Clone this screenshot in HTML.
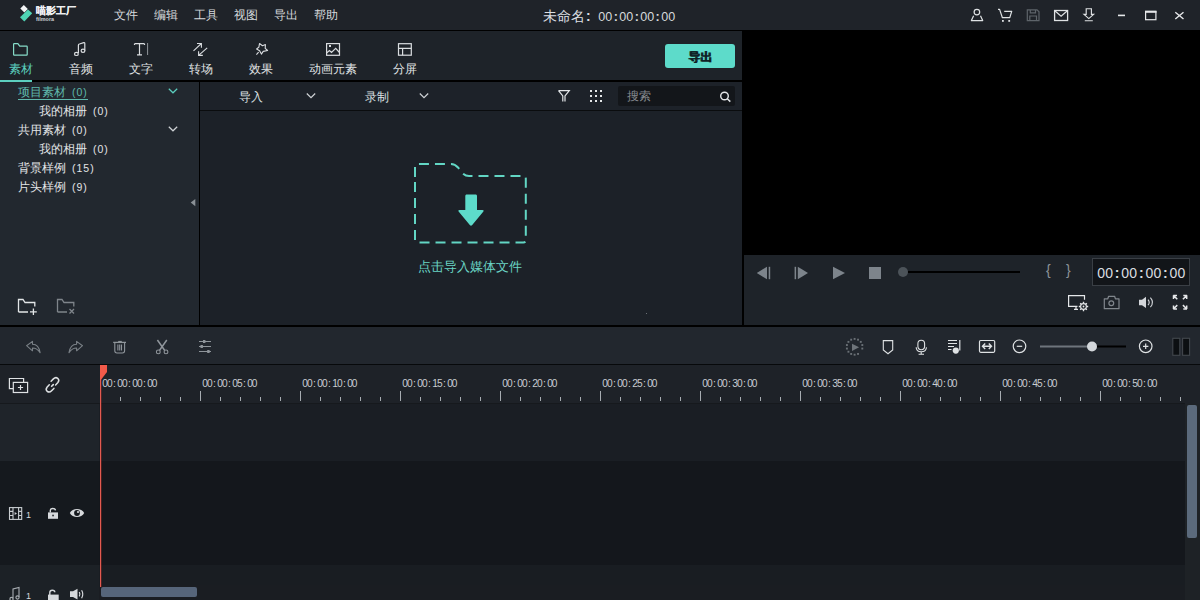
<!DOCTYPE html>
<html><head><meta charset="utf-8">
<style>
*{margin:0;padding:0;box-sizing:border-box}
html,body{width:1200px;height:600px;overflow:hidden;background:#000}
body{position:relative;font-family:"Liberation Sans",sans-serif;color:#d4d7da;font-size:12px;font-weight:500}
.a{position:absolute}
svg{position:absolute;overflow:visible}
.t{position:absolute;white-space:nowrap;line-height:1}
.tc i,.tc b{display:inline-block;text-align:center;font-style:normal}
.tc i{font-weight:normal}
.tc1 i{width:7.05px}.tc1 b{width:6.9px;font-weight:bold}
.tc2 i{width:8.05px}.tc2 b{width:8px;font-weight:bold}
.tc3 i{width:4.7px}.tc3 b{width:5.6px;font-weight:normal}
.n{font-size:10.5px;letter-spacing:1px;margin-left:6px}
</style></head><body>

<!-- TITLE BAR -->
<div class="a" style="left:0;top:0;width:1200px;height:30px;background:#1f2329"></div>
<!-- logo -->
<svg style="left:0;top:0" width="100" height="30">
  <polygon points="20.3,8.6 23.8,5 27.8,9 24.3,12.5" fill="#f2f4f5"/>
  <polygon points="20,17.3 28,9.5 32.2,13.3 24.3,21.6" fill="#4fd4b4"/>
</svg>
<div class="t" style="left:36px;top:6px;font-size:10px;font-weight:bold;text-shadow:0.3px 0 0 #f0f2f3;color:#f0f2f3">喵影工厂</div>
<div class="t" style="left:36px;top:16.6px;font-size:5.4px;font-weight:bold;color:#cfd2d5">filmora</div>

<div class="t" style="left:114px;top:9px;font-size:12px;color:#d6d9dc">文件</div>
<div class="t" style="left:154px;top:9px;font-size:12px;color:#d6d9dc">编辑</div>
<div class="t" style="left:194px;top:9px;font-size:12px;color:#d6d9dc">工具</div>
<div class="t" style="left:234px;top:9px;font-size:12px;color:#d6d9dc">视图</div>
<div class="t" style="left:274px;top:9px;font-size:12px;color:#d6d9dc">导出</div>
<div class="t" style="left:314px;top:9px;font-size:12px;color:#d6d9dc">帮助</div>

<div class="t" style="left:543px;top:10px;font-size:13.8px;color:#dcdfe2">未命名<b style="font-weight:bold;margin-left:1px">:</b></div>
<div class="t tc tc1" style="left:598.2px;top:11px;font-size:12.5px;color:#d6d9dc"><i>0</i><i>0</i><b>:</b><i>0</i><i>0</i><b>:</b><i>0</i><i>0</i><b>:</b><i>0</i><i>0</i></div>



<svg style="left:0;top:0" width="1200" height="30" fill="none" stroke-width="1.2">
  <!-- user -->
  <circle cx="976.9" cy="12.1" r="2.8" stroke="#dfe2e4"/>
  <path d="M973.6 15.7 L971.4 20.6 H982.7 L980.5 15.7" stroke="#dfe2e4" stroke-linejoin="round"/>
  <!-- cart -->
  <path d="M998 9.4 H999.6 L1002.4 17.7 H1009.8 L1011.7 11.4 H1004.2" stroke="#dfe2e4" stroke-linejoin="round"/>
  <rect x="1002" y="20" width="1.8" height="1.8" fill="#dfe2e4" stroke="none"/>
  <rect x="1008.3" y="20" width="1.8" height="1.8" fill="#dfe2e4" stroke="none"/>
  <!-- save -->
  <path d="M1027.3 9.8 H1037 L1039 11.8 V20.6 H1027.3 Z M1030.3 9.8 V12.8 H1035.5 V9.8 M1029.8 20.6 V16 H1036.5 V20.6" stroke="#5e646a"/>
  <!-- mail -->
  <rect x="1054.6" y="10.5" width="13" height="10" stroke="#dfe2e4" stroke-width="1.3"/>
  <path d="M1054.8 10.8 L1061.1 16.2 L1067.4 10.8" stroke="#dfe2e4" stroke-width="1.2"/>
  <!-- download -->
  <path d="M1086.2 8.7 H1091.4 V14.4 H1093.6 L1088.8 18.6 L1084 14.4 H1086.2 Z M1084.8 20.7 H1092.8" stroke="#dfe2e4" stroke-width="1.15"/>
  <!-- min max close -->
  <rect x="1118" y="14.6" width="7" height="1.6" fill="#e6e8ea" stroke="none"/>
  <rect x="1145.6" y="11.4" width="10.3" height="8.3" stroke="#e6e8ea" stroke-width="1.2"/>
  <rect x="1145" y="10.8" width="11.5" height="2" fill="#e6e8ea" stroke="none"/>
  <path d="M1175.3 12.2 L1183.5 19 M1183.5 12.2 L1175.3 19" stroke="#e6e8ea" stroke-width="1.4"/>
</svg>

<!-- ============ MEDIA PANEL ============ -->
<div class="a" style="left:0;top:31px;width:742px;height:49px;background:#1e2329"></div>
<!-- active underline -->
<div class="a" style="left:0;top:80px;width:32px;height:2px;background:#5ccfbf"></div>
<!-- tab icons -->
<svg style="left:0;top:30px" width="430" height="30" fill="none" stroke-width="1.2">
  <!-- folder (active) -->
  <path d="M13.6 14.3 Q13.6 13.7 14.2 13.7 H17.9 L19.7 16.2 H26.6 Q27.2 16.2 27.2 16.8 V24.6 Q27.2 25.2 26.6 25.2 H14.2 Q13.6 25.2 13.6 24.6 Z" stroke="#86dcc8" stroke-linejoin="round"/>
  <!-- music -->
  <path d="M78.4 23 V15.2 Q78.4 14.2 79.4 14 L83.8 12.7 Q84.8 12.5 84.8 13.5 V20.5" stroke="#dadde0"/>
  <ellipse cx="76.4" cy="23.9" rx="1.9" ry="1.6" stroke="#dadde0"/>
  <ellipse cx="83" cy="20.8" rx="1.9" ry="1.6" stroke="#dadde0"/>
  <!-- T -->
  <path d="M134.5 13.7 H144.5 M139.5 13.7 V24.8 M137 24.8 H142 M134.5 13.7 V14.9 M144.5 13.7 V14.9" stroke="#dadde0"/>
  <path d="M147.6 13 V25" stroke="#9ea3a8" stroke-width="0.9"/>
  <!-- transition -->
  <path d="M193.5 20.8 L201.4 13.5 M197 13.5 H201.4 V17.7 M207.2 17.9 L198.6 25.4 M198.6 21.2 V25.4 H202.8" stroke="#dadde0" stroke-width="1.1"/>
  <!-- effects star wand -->
  <path d="M259.5 13.5 L262.5 15.7 L265.4 14.6 L265.2 18.4 L267.6 20.5 L263.2 21.4 L261.4 24.1 L259.6 20.8 L256.6 19 L258.9 17.1 Z M258.6 22.2 L256.4 24.7" stroke="#dadde0" stroke-linejoin="round" stroke-width="1.1"/>
  <!-- image -->
  <rect x="326.6" y="13.6" width="12.9" height="11.7" stroke="#dadde0"/>
  <path d="M326.8 22.8 L329.5 20.5 L331.5 22.5 L335.7 18.4 L339.5 22.5" stroke="#dadde0"/>
  <rect x="329" y="15" width="2" height="2" fill="#dadde0" stroke="none"/>
  <!-- split -->
  <rect x="398.5" y="13.7" width="12.8" height="11.5" stroke="#dadde0"/>
  <path d="M398.5 18.4 H411.3 M402.6 18.4 V25.2" stroke="#dadde0"/>
</svg>
<div class="t" style="left:9px;top:63px;font-size:12px;color:#5ccfbf">素材</div>
<div class="t" style="left:69px;top:63px;font-size:12px;color:#e0e3e5">音频</div>
<div class="t" style="left:129px;top:63px;font-size:12px;color:#e0e3e5">文字</div>
<div class="t" style="left:189px;top:63px;font-size:12px;color:#e0e3e5">转场</div>
<div class="t" style="left:249px;top:63px;font-size:12px;color:#e0e3e5">效果</div>
<div class="t" style="left:309px;top:63px;font-size:12px;color:#e0e3e5">动画元素</div>
<div class="t" style="left:393px;top:63px;font-size:12px;color:#e0e3e5">分屏</div>
<!-- export button -->
<div class="a" style="left:665px;top:44px;width:70px;height:24px;background:#5ddbca;border-radius:3px"></div>
<div class="t" style="left:688px;top:50.5px;font-size:12px;font-weight:900;text-shadow:0.5px 0 0 #0e2024;color:#0e2024">导出</div>

<!-- sidebar -->
<div class="a" style="left:0;top:82px;width:199px;height:243px;background:#22282f"></div>
<div class="a" style="left:199px;top:82px;width:1px;height:243px;background:#000"></div>
<div class="t" style="left:18px;top:86px;font-size:12px;color:#5fb8ad">项目素材<span class="n">(0)</span></div>
<div class="a" style="left:18px;top:99px;width:70px;height:1px;background:#5fb8ad"></div>
<div class="t" style="left:39px;top:105px;font-size:12px;color:#e2e5e7">我的相册<span class="n">(0)</span></div>
<div class="t" style="left:18px;top:124px;font-size:12px;color:#e2e5e7">共用素材<span class="n">(0)</span></div>
<div class="t" style="left:39px;top:143px;font-size:12px;color:#e2e5e7">我的相册<span class="n">(0)</span></div>
<div class="t" style="left:18px;top:162px;font-size:12px;color:#e2e5e7">背景样例<span class="n">(15)</span></div>
<div class="t" style="left:18px;top:181px;font-size:12px;color:#e2e5e7">片头样例<span class="n">(9)</span></div>
<svg style="left:0;top:0" width="200" height="330" fill="none" stroke-width="1.2">
  <path d="M168.8 88.8 L173 92.8 L177.2 88.8" stroke="#5ccfbf"/>
  <path d="M168.8 126.8 L173 130.8 L177.2 126.8" stroke="#cfd3d6"/>
  <polygon points="195.3,199 195.3,206.3 190.7,202.6" fill="#8a9096"/>
  <!-- new folder -->
  <path d="M18.5 312 V299.5 H23 L25 302.5 H34.8 V306.5 M28 312 H18.5" stroke="#e3e6e8" stroke-width="1.3"/>
  <path d="M30 311.8 H36.8 M33.4 308.5 V315" stroke="#e3e6e8" stroke-width="1.3"/>
  <!-- delete folder -->
  <path d="M57.5 312 V299.5 H62 L64 302.5 H73.8 V306.5 M67 312 H57.5" stroke="#7f858b" stroke-width="1.3"/>
  <path d="M69.5 309 L74 313.5 M74 309 L69.5 313.5" stroke="#7f858b" stroke-width="1.3"/>
</svg>

<!-- media content -->
<div class="a" style="left:200px;top:82px;width:542px;height:28px;background:#1d2229"></div>
<div class="a" style="left:200px;top:110px;width:542px;height:1px;background:#0a0c0e"></div>
<div class="a" style="left:200px;top:111px;width:542px;height:214px;background:#1c2128"></div>
<div class="t" style="left:239px;top:91px;font-size:12px;color:#dfe2e4">导入</div>
<div class="t" style="left:365px;top:91px;font-size:12px;color:#dfe2e4">录制</div>
<svg style="left:0;top:0" width="742" height="330" fill="none" stroke-width="1.2">
  <path d="M306.8 93.5 L311 97.7 L315.2 93.5" stroke="#cfd3d6"/>
  <path d="M419.8 93.5 L424 97.7 L428.2 93.5" stroke="#cfd3d6"/>
  <!-- filter -->
  <path d="M558.5 90.6 H569.3 L565 96 V101.5 M562.8 101.5 V96 L558.5 90.6" stroke="#e3e6e8"/>
  <!-- dots -->
  <g fill="#e3e6e8" stroke="none">
    <rect x="590" y="90" width="2" height="2"/><rect x="595" y="90" width="2" height="2"/><rect x="600" y="90" width="2" height="2"/>
    <rect x="590" y="95" width="2" height="2"/><rect x="595" y="95" width="2" height="2"/><rect x="600" y="95" width="2" height="2"/>
    <rect x="590" y="100" width="2" height="2"/><rect x="595" y="100" width="2" height="2"/><rect x="600" y="100" width="2" height="2"/>
  </g>
</svg>
<div class="a" style="left:618px;top:86px;width:117px;height:20px;background:#13161a;border-radius:2px"></div>
<div class="t" style="left:627px;top:90px;font-size:12px;color:#85898e">搜索</div>
<svg style="left:0;top:0" width="742" height="330" fill="none">
  <circle cx="724.5" cy="96" r="3.8" stroke="#e3e6e8" stroke-width="1.4"/>
  <path d="M727.3 98.8 L730.3 101.6" stroke="#e3e6e8" stroke-width="1.5"/>
  <!-- dashed folder -->
  <path d="M415 177.1 V166.5 Q415 164 417.5 164 H451 Q455 164 458 167.5 L462 172.5 Q465 176 469 176 H523.3 Q525.8 176 525.8 178.5 V240 Q525.8 242.5 523.3 242.5 H417.5 Q415 242.5 415 240 Z" stroke="#62d6c4" stroke-width="2" stroke-dasharray="10 6"/>
  <path d="M466.3 194.5 Q465.3 194.5 465.3 196 V210 H459.5 Q457.5 210 458.8 211.8 L469.8 225 Q471 226.3 472.2 225 L483.2 211.8 Q484.5 210 482.5 210 H477 V196 Q477 194.5 476 194.5 Z" fill="#5ddbca"/>
</svg>
<div class="t" style="left:418px;top:260px;font-size:13px;color:#6ad4c4">点击导入媒体文件</div>
<div class="a" style="left:646px;top:313px;width:1px;height:1px;background:#6a7075"></div>

<!-- ============ PREVIEW ============ -->
<div class="a" style="left:742px;top:30px;width:2px;height:297px;background:#000"></div>
<div class="a" style="left:744px;top:30px;width:456px;height:225px;background:#000"></div>
<div class="a" style="left:744px;top:255px;width:456px;height:70px;background:#1e2329"></div>
<svg style="left:0;top:0" width="1200" height="330">
  <g fill="#7d848b">
    <polygon points="756.8,273 767,266.8 767,279.2"/>
    <rect x="768.7" y="266.8" width="1.5" height="12.4"/>
    <rect x="794.6" y="266.8" width="1.5" height="12.4"/>
    <polygon points="808,273 797.8,266.8 797.8,279.2"/>
    <polygon points="845,273 833,266.7 833,279.2"/>
    <rect x="869" y="267" width="12" height="12"/>
  </g>
  <rect x="903" y="271" width="117" height="2" fill="#000"/>
  <circle cx="903" cy="272" r="5" fill="#4c5359"/>
</svg>
<div class="t" style="left:1046px;top:263px;font-size:14px;color:#8d9398">{</div>
<div class="t" style="left:1066px;top:263px;font-size:14px;color:#8d9398">}</div>
<div class="a" style="left:1092px;top:258px;width:98px;height:28px;background:#121519;border:1px solid #3a3f45"></div>
<div class="t tc tc2" style="left:1097.1px;top:266px;font-size:14px;color:#dadde0"><i>0</i><i>0</i><b>:</b><i>0</i><i>0</i><b>:</b><i>0</i><i>0</i><b>:</b><i>0</i><i>0</i></div>
<svg style="left:0;top:0" width="1200" height="330" fill="none" stroke-width="1.2">
  <!-- monitor gear -->
  <path d="M1077.5 306.3 H1068.6 V295.6 H1084.5 V299.8" stroke="#e6e8ea"/>
  <path d="M1076 306.3 V309.3 M1074 309.3 H1078" stroke="#e6e8ea"/>
  <circle cx="1083.5" cy="306.5" r="2.9" stroke="#e6e8ea" stroke-width="1.1"/>
  <circle cx="1083.5" cy="306.5" r="0.9" fill="#e6e8ea" stroke="none"/>
  <path d="M1086.70 306.50 L1088.20 306.50 M1085.76 308.76 L1086.82 309.82 M1083.50 309.70 L1083.50 311.20 M1081.24 308.76 L1080.18 309.82 M1080.30 306.50 L1078.80 306.50 M1081.24 304.24 L1080.18 303.18 M1083.50 303.30 L1083.50 301.80 M1085.76 304.24 L1086.82 303.18" stroke="#e6e8ea" stroke-width="1.4"/>
  <!-- camera -->
  <path d="M1104.3 298.8 H1107.8 L1108.6 296.3 H1114.6 L1115.4 298.8 H1119 V308.7 H1104.3 Z" stroke="#80868c" stroke-linejoin="round"/>
  <circle cx="1111.3" cy="303.3" r="2.4" stroke="#80868c"/>
  <!-- speaker -->
  <path d="M1139 299.8 H1142 L1146 296.8 V308 L1142 305.2 H1139 Z" fill="#d3d6da" stroke="none"/>
  <path d="M1148 299.6 Q1150.4 302.4 1148 305.2 M1150.4 297.6 Q1154.6 302.4 1150.4 307.2" stroke="#d3d6da" stroke-width="1.1"/>
  <!-- fullscreen -->
  <path d="M1173.6 295.6 L1177.3 299.3 M1173.3 295.5 H1177 M1173.5 295.3 V299 M1186.6 295.6 L1182.9 299.3 M1187 295.5 H1183.3 M1186.7 295.3 V299 M1173.6 308.8 L1177.3 305.1 M1173.3 308.9 H1177 M1173.5 309.1 V305.4 M1186.6 308.8 L1182.9 305.1 M1187 308.9 H1183.3 M1186.7 309.1 V305.4" stroke="#e6e8ea" stroke-width="1.5"/>
</svg>

<!-- ============ TIMELINE TOOLBAR ============ -->
<div class="a" style="left:0;top:325px;width:1200px;height:2px;background:#000"></div>
<div class="a" style="left:0;top:327px;width:1200px;height:37px;background:#22272e"></div>
<div class="a" style="left:0;top:364px;width:1200px;height:1px;background:#07090b"></div>

<!-- ============ RULER ============ -->
<div class="a" style="left:0;top:365px;width:1200px;height:39px;background:#1e2228"></div>

<!-- ============ TRACKS ============ -->
<div class="a" style="left:0;top:403px;width:1185px;height:1px;background:#16191d"></div>
<div class="a" style="left:0;top:404px;width:1185px;height:57px;background:#1a1e24"></div>
<div class="a" style="left:0;top:404px;width:99px;height:57px;background:#1f242a"></div>
<div class="a" style="left:0;top:461px;width:1185px;height:104px;background:#14171c"></div>
<div class="a" style="left:0;top:461px;width:99px;height:104px;background:#15191e"></div>
<div class="a" style="left:0;top:565px;width:1185px;height:20px;background:#191d22"></div>
<div class="a" style="left:0;top:565px;width:99px;height:35px;background:#1c2126"></div>
<div class="a" style="left:99px;top:585px;width:1086px;height:15px;background:#1a1d22"></div>
<div class="a" style="left:1185px;top:404px;width:15px;height:196px;background:#1e2226"></div>
<div class="a" style="left:1187px;top:405px;width:10px;height:133px;background:#5b6a7c;border-radius:2px"></div>
<div class="a" style="left:101px;top:587px;width:96px;height:10px;background:#56657a;border-radius:2px"></div>


<!-- timeline toolbar icons -->
<svg style="left:0;top:0" width="1200" height="400" fill="none" stroke-width="1.2">
  <!-- undo -->
  <path d="M26.6 345.7 L32.5 341.4 V344.2 Q38.8 344.3 40.1 352.6 Q37 348 32.5 348 V350.8 Z" stroke="#7a8086" stroke-width="1.1" stroke-linejoin="round"/>
  <!-- redo -->
  <path d="M82.5 345.7 L76.6 341.4 V344.2 Q70.3 344.3 69 352.6 Q72.1 348 76.6 348 V350.8 Z" stroke="#7a8086" stroke-width="1.1" stroke-linejoin="round"/>
  <!-- trash -->
  <path d="M113.2 342.4 H126" stroke="#8f959b" stroke-width="1.3"/>
  <path d="M118.2 341.5 H121.8" stroke="#8f959b" stroke-width="1.2"/>
  <path d="M114.8 342.6 V350.8 Q114.8 353 117 353 H122.4 Q124.6 353 124.6 350.8 V342.6 M117.9 344.6 V350.6 M119.7 344.6 V350.6 M121.5 344.6 V350.6" stroke="#8f959b" stroke-width="1.1"/>
  <!-- scissors -->
  <path d="M157.4 340 L164.6 350.2 M166.8 340 L159.6 350.2" stroke="#8f959b" stroke-width="1.5"/>
  <circle cx="158.3" cy="351.9" r="1.9" stroke="#8f959b" stroke-width="1.1"/>
  <circle cx="166" cy="351.9" r="1.9" stroke="#8f959b" stroke-width="1.1"/>
  <!-- adjust -->
  <path d="M199 341.5 H211 M199 346.5 H211 M199 351.5 H211" stroke="#8f959b"/>
  <rect x="203" y="340" width="2.4" height="3" fill="#8f959b" stroke="none"/>
  <rect x="200.5" y="345" width="2.4" height="3" fill="#8f959b" stroke="none"/>
  <rect x="207.2" y="350" width="2.4" height="3" fill="#8f959b" stroke="none"/>

  <!-- render dotted circle -->
  <rect x="853.65" y="337.95" width="1.9" height="1.9" fill="#6a7076" stroke="none"/>
  <rect x="857.08" y="338.73" width="1.9" height="1.9" fill="#6a7076" stroke="none"/>
  <rect x="859.83" y="340.92" width="1.9" height="1.9" fill="#6a7076" stroke="none"/>
  <rect x="861.35" y="344.09" width="1.9" height="1.9" fill="#6a7076" stroke="none"/>
  <rect x="861.35" y="347.61" width="1.9" height="1.9" fill="#6a7076" stroke="none"/>
  <rect x="857.08" y="352.97" width="1.9" height="1.9" fill="#6a7076" stroke="none"/>
  <rect x="853.65" y="353.75" width="1.9" height="1.9" fill="#6a7076" stroke="none"/>
  <rect x="850.22" y="352.97" width="1.9" height="1.9" fill="#6a7076" stroke="none"/>
  <rect x="847.47" y="350.78" width="1.9" height="1.9" fill="#6a7076" stroke="none"/>
  <rect x="845.95" y="347.61" width="1.9" height="1.9" fill="#6a7076" stroke="none"/>
  <rect x="845.95" y="344.09" width="1.9" height="1.9" fill="#6a7076" stroke="none"/>
  <rect x="847.47" y="340.92" width="1.9" height="1.9" fill="#6a7076" stroke="none"/>
  <rect x="850.22" y="338.73" width="1.9" height="1.9" fill="#6a7076" stroke="none"/>
  <polygon points="852,343.7 852,350.9 859.1,347.3" fill="#6e747a"/>
  <!-- marker -->
  <path d="M883.3 340.6 H892.7 V350 L888 353.8 L883.3 350 Z" stroke="#dfe2e4" stroke-width="1.1" stroke-linejoin="miter"/>
  <!-- mic -->
  <rect x="917.9" y="340.3" width="6.7" height="9.4" rx="3.35" stroke="#dfe2e4" stroke-width="1.1"/>
  <path d="M916.2 347.2 Q916.2 351.7 921.2 351.7 Q926.4 351.7 926.4 347.2 M921.2 351.7 V354.3 M918.6 354.3 H924" stroke="#dfe2e4" stroke-width="1.1"/>
  <!-- voiceover -->
  <path d="M948 340.5 H957 M948 343.5 H957 M948 346.5 H954 M948 349.5 H951.5 M959.8 340 V350.5" stroke="#dfe2e4"/>
  <circle cx="955.8" cy="350.6" r="3.1" fill="#dfe2e4" stroke="none"/>
  <!-- fit -->
  <rect x="979.5" y="340.5" width="15.2" height="11.8" rx="1.2" stroke="#dfe2e4" stroke-width="1.2"/>
  <path d="M982.8 346.3 H991.2 M985.2 343.6 L982.5 346.3 L985.2 349 M988.8 343.6 L991.5 346.3 L988.8 349" stroke="#dfe2e4" stroke-width="1.4"/>
  <!-- zoom out -->
  <circle cx="1019.5" cy="346.3" r="6.3" stroke="#dfe2e4"/>
  <path d="M1016.8 346.3 H1022.2" stroke="#dfe2e4"/>
  <!-- slider -->
  <rect x="1040" y="345.5" width="52" height="2" fill="#6e757c" stroke="none"/>
  <rect x="1092" y="345.5" width="34" height="2" fill="#000" stroke="none"/>
  <circle cx="1092" cy="346.5" r="5" fill="#d3d7db" stroke="none"/>
  <!-- zoom in -->
  <circle cx="1145.7" cy="346.3" r="6.3" stroke="#dfe2e4"/>
  <path d="M1143 346.3 H1148.4 M1145.7 343.6 V349" stroke="#dfe2e4"/>
  <!-- pause-like -->
  <rect x="1172.8" y="338.3" width="7" height="17" fill="#0c0f12" stroke="#42474d" stroke-width="1.1"/>
  <rect x="1182.6" y="338.3" width="7" height="17" fill="#0c0f12" stroke="#42474d" stroke-width="1.1"/>

  <!-- ruler header icons -->
  <path d="M13.3 388.6 H9.4 V378.5 H23.6 V382.4" stroke="#dfe2e4" stroke-width="1.2"/>
  <rect x="13.3" y="382.4" width="14.3" height="10.1" stroke="#dfe2e4" stroke-width="1.2"/>
  <path d="M17.9 387.5 H23.1 M20.5 384.9 V390.1" stroke="#dfe2e4" stroke-width="1.2"/>
  <!-- link -->
  <path d="M49.3 384.8 L47 387.2 Q45.2 389.6 47.3 391.4 Q49.4 393 51.6 390.8 L53.9 388.4 M55.6 384.9 L57.9 382.5 Q59.8 380.1 57.7 378.3 Q55.6 376.7 53.4 378.9 L51.1 381.3" stroke="#dfe2e4" stroke-width="1.5" stroke-linecap="round"/>
  <path d="M51.6 386.3 L53.3 384.6" stroke="#dfe2e4" stroke-width="1.6" stroke-linecap="round"/>
</svg>
<svg style="left:0;top:0" width="1200" height="410" fill="#a7acb1">
<rect x="100" y="391" width="1" height="10"/>
<rect x="120" y="397" width="1" height="4"/>
<rect x="140" y="397" width="1" height="4"/>
<rect x="160" y="397" width="1" height="4"/>
<rect x="180" y="397" width="1" height="4"/>
<rect x="200" y="391" width="1" height="10"/>
<rect x="220" y="397" width="1" height="4"/>
<rect x="240" y="397" width="1" height="4"/>
<rect x="260" y="397" width="1" height="4"/>
<rect x="280" y="397" width="1" height="4"/>
<rect x="300" y="391" width="1" height="10"/>
<rect x="320" y="397" width="1" height="4"/>
<rect x="340" y="397" width="1" height="4"/>
<rect x="360" y="397" width="1" height="4"/>
<rect x="380" y="397" width="1" height="4"/>
<rect x="400" y="391" width="1" height="10"/>
<rect x="420" y="397" width="1" height="4"/>
<rect x="440" y="397" width="1" height="4"/>
<rect x="460" y="397" width="1" height="4"/>
<rect x="480" y="397" width="1" height="4"/>
<rect x="500" y="391" width="1" height="10"/>
<rect x="520" y="397" width="1" height="4"/>
<rect x="540" y="397" width="1" height="4"/>
<rect x="560" y="397" width="1" height="4"/>
<rect x="580" y="397" width="1" height="4"/>
<rect x="600" y="391" width="1" height="10"/>
<rect x="620" y="397" width="1" height="4"/>
<rect x="640" y="397" width="1" height="4"/>
<rect x="660" y="397" width="1" height="4"/>
<rect x="680" y="397" width="1" height="4"/>
<rect x="700" y="391" width="1" height="10"/>
<rect x="720" y="397" width="1" height="4"/>
<rect x="740" y="397" width="1" height="4"/>
<rect x="760" y="397" width="1" height="4"/>
<rect x="780" y="397" width="1" height="4"/>
<rect x="800" y="391" width="1" height="10"/>
<rect x="820" y="397" width="1" height="4"/>
<rect x="840" y="397" width="1" height="4"/>
<rect x="860" y="397" width="1" height="4"/>
<rect x="880" y="397" width="1" height="4"/>
<rect x="900" y="391" width="1" height="10"/>
<rect x="920" y="397" width="1" height="4"/>
<rect x="940" y="397" width="1" height="4"/>
<rect x="960" y="397" width="1" height="4"/>
<rect x="980" y="397" width="1" height="4"/>
<rect x="1000" y="391" width="1" height="10"/>
<rect x="1020" y="397" width="1" height="4"/>
<rect x="1040" y="397" width="1" height="4"/>
<rect x="1060" y="397" width="1" height="4"/>
<rect x="1080" y="397" width="1" height="4"/>
<rect x="1100" y="391" width="1" height="10"/>
<rect x="1120" y="397" width="1" height="4"/>
<rect x="1140" y="397" width="1" height="4"/>
<rect x="1160" y="397" width="1" height="4"/>
<rect x="1180" y="397" width="1" height="4"/>
</svg>
<div class="t tc tc3" style="left:102.25px;top:379.3px;font-size:10.2px;color:#c8ccd0"><i>0</i><i>0</i><b>:</b><i>0</i><i>0</i><b>:</b><i>0</i><i>0</i><b>:</b><i>0</i><i>0</i></div>
<div class="t tc tc3" style="left:202.25px;top:379.3px;font-size:10.2px;color:#c8ccd0"><i>0</i><i>0</i><b>:</b><i>0</i><i>0</i><b>:</b><i>0</i><i>5</i><b>:</b><i>0</i><i>0</i></div>
<div class="t tc tc3" style="left:302.25px;top:379.3px;font-size:10.2px;color:#c8ccd0"><i>0</i><i>0</i><b>:</b><i>0</i><i>0</i><b>:</b><i>1</i><i>0</i><b>:</b><i>0</i><i>0</i></div>
<div class="t tc tc3" style="left:402.25px;top:379.3px;font-size:10.2px;color:#c8ccd0"><i>0</i><i>0</i><b>:</b><i>0</i><i>0</i><b>:</b><i>1</i><i>5</i><b>:</b><i>0</i><i>0</i></div>
<div class="t tc tc3" style="left:502.25px;top:379.3px;font-size:10.2px;color:#c8ccd0"><i>0</i><i>0</i><b>:</b><i>0</i><i>0</i><b>:</b><i>2</i><i>0</i><b>:</b><i>0</i><i>0</i></div>
<div class="t tc tc3" style="left:602.25px;top:379.3px;font-size:10.2px;color:#c8ccd0"><i>0</i><i>0</i><b>:</b><i>0</i><i>0</i><b>:</b><i>2</i><i>5</i><b>:</b><i>0</i><i>0</i></div>
<div class="t tc tc3" style="left:702.25px;top:379.3px;font-size:10.2px;color:#c8ccd0"><i>0</i><i>0</i><b>:</b><i>0</i><i>0</i><b>:</b><i>3</i><i>0</i><b>:</b><i>0</i><i>0</i></div>
<div class="t tc tc3" style="left:802.25px;top:379.3px;font-size:10.2px;color:#c8ccd0"><i>0</i><i>0</i><b>:</b><i>0</i><i>0</i><b>:</b><i>3</i><i>5</i><b>:</b><i>0</i><i>0</i></div>
<div class="t tc tc3" style="left:902.25px;top:379.3px;font-size:10.2px;color:#c8ccd0"><i>0</i><i>0</i><b>:</b><i>0</i><i>0</i><b>:</b><i>4</i><i>0</i><b>:</b><i>0</i><i>0</i></div>
<div class="t tc tc3" style="left:1002.25px;top:379.3px;font-size:10.2px;color:#c8ccd0"><i>0</i><i>0</i><b>:</b><i>0</i><i>0</i><b>:</b><i>4</i><i>5</i><b>:</b><i>0</i><i>0</i></div>
<div class="t tc tc3" style="left:1102.25px;top:379.3px;font-size:10.2px;color:#c8ccd0"><i>0</i><i>0</i><b>:</b><i>0</i><i>0</i><b>:</b><i>5</i><i>0</i><b>:</b><i>0</i><i>0</i></div>
<!-- track headers -->
<svg style="left:0;top:0" width="200" height="600" fill="none" stroke-width="1.1">
  <!-- film -->
  <rect x="9.5" y="507.6" width="12.2" height="11.8" stroke="#c9cdd1" stroke-width="1.1"/>
  <path d="M13 507.6 V519.4 M18.6 507.6 V519.4 M9.5 511.4 H13 M9.5 515.5 H13 M18.6 511.4 H21.7 M18.6 515.5 H21.7" stroke="#c9cdd1" stroke-width="1.1"/>
  <polygon points="14.6,511.9 14.6,515.1 17,513.5" fill="#c9cdd1" stroke="none"/>
  <!-- lock -->
  <path d="M50.3 512.6 V510.6 Q50.3 508.5 52.8 508.5 Q55.3 508.5 55.5 510.4" stroke="#d6d9dc" stroke-width="1.4"/>
  <rect x="48" y="512.4" width="10" height="6.4" fill="#d6d9dc" stroke="none"/>
  <rect x="52.3" y="514.7" width="1.5" height="1.6" fill="#171a1f" stroke="none"/>
  <!-- eye -->
  <path d="M69.8 513 C72.3 507.6 81.7 507.6 84.2 513 C81.7 518.4 72.3 518.4 69.8 513 Z" fill="#d6d9dc" stroke="none"/>
  <circle cx="77" cy="513" r="2.9" fill="#15191e" stroke="none"/>
  <circle cx="78" cy="512" r="1.1" fill="#d6d9dc" stroke="none"/>
  <!-- audio music -->
  <path d="M13 598.5 V589 L19 587.5 V597" stroke="#a8adb2" stroke-width="1.1"/>
  <circle cx="11.5" cy="599" r="1.6" stroke="#a8adb2"/>
  <circle cx="17.5" cy="597.5" r="1.6" stroke="#a8adb2"/>
  <!-- audio lock -->
  <path d="M49.8 595 V592.5 Q49.8 590.3 52.3 590.3 Q54.8 590.3 54.8 592.3" stroke="#d6d9dc" stroke-width="1.4"/>
  <rect x="48" y="594.6" width="10.7" height="6.6" fill="#d6d9dc" stroke="none"/>
  <!-- audio speaker -->
  <path d="M70 591.3 H73 L77.5 588.8 V599.5 L73 597 H70 Z" fill="#d6d9dc" stroke="none"/>
  <path d="M79.3 592 Q80.5 594.2 79.3 596.4 M81.6 590.2 Q84 594.2 81.6 598.2" stroke="#d6d9dc" stroke-width="1.2"/>
</svg>
<div class="t" style="left:26px;top:511px;font-size:9px;color:#d6d9dc">1</div>
<div class="t" style="left:26px;top:592px;font-size:9px;color:#d6d9dc">1</div>

<!-- playhead -->
<div class="a" style="left:100px;top:365px;width:1px;height:222px;background:#e35a50"></div><div class="a" style="left:101px;top:365px;width:1px;height:222px;background:rgba(170,45,40,0.35)"></div>
<svg style="left:0;top:0" width="200" height="400"><polygon points="100,365 107,365 107,372 100.8,380 100,380" fill="#f25a4a"/></svg>

</body></html>
